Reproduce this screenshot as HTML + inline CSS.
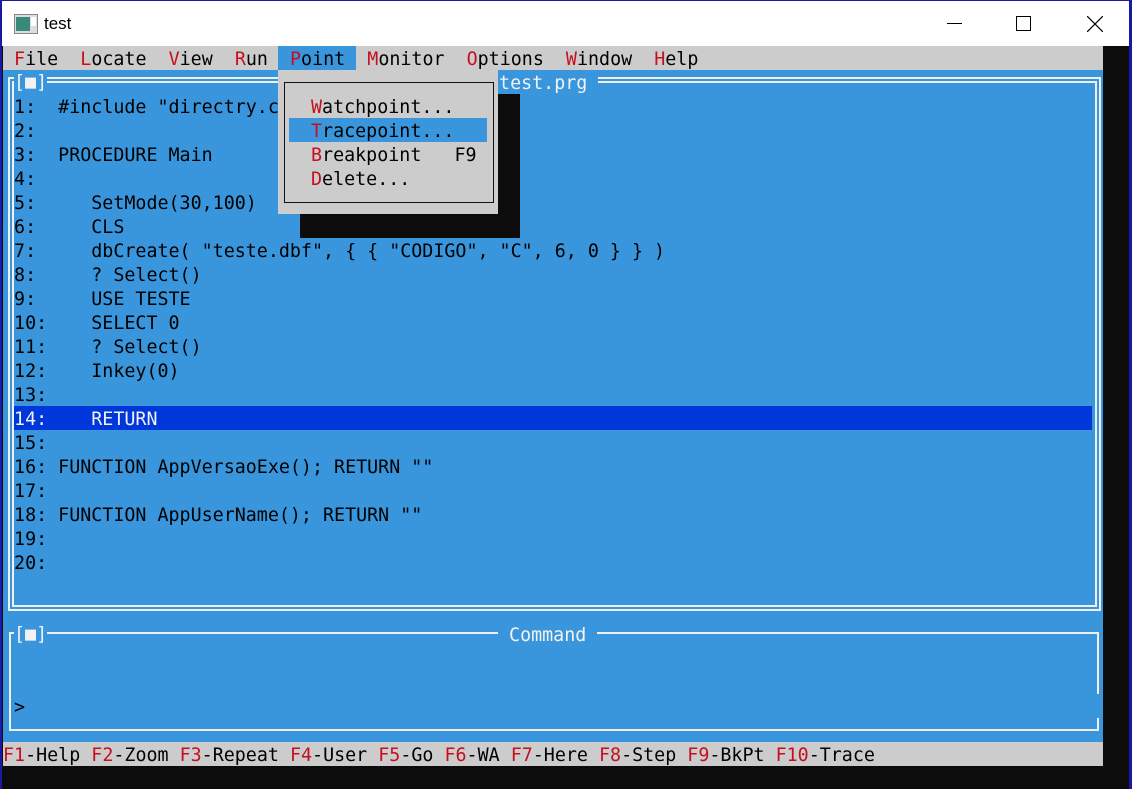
<!DOCTYPE html>
<html><head><meta charset="utf-8"><style>
*{margin:0;padding:0;box-sizing:border-box}
body{width:1132px;height:789px;background:#0c0c0c;position:relative;overflow:hidden;font-family:"DejaVu Sans Mono","Liberation Mono",monospace;}
.a{position:absolute}
.t{position:absolute;white-space:pre;font-size:18.33px;line-height:24px;color:#000;letter-spacing:0}
.r{color:#c50f1f}
.w{color:#f2f2f2}
</style></head><body>
<div class="a" style="left:0;top:0;width:1132px;height:789px;border-left:2px solid #1a1aa0;border-right:3px solid #1a1aa0;"></div>
<div class="a" style="left:2px;top:0;width:1127px;height:46px;background:#fff;border-top:1px solid #1a1aa0"></div>
<svg class="a" style="left:14px;top:14px" width="24" height="20" viewBox="0 0 24 20"><rect x="0.5" y="0.5" width="23" height="19" fill="#ddd" stroke="#888"/><rect x="2" y="3" width="14" height="14" fill="#3a8a7a"/><rect x="17" y="3" width="5" height="9" fill="#fff"/></svg>
<div class="a" style="left:44px;top:14px;font:17px 'Liberation Sans',sans-serif;color:#000">test</div>
<div class="a" style="left:947px;top:23px;width:15px;height:1px;background:#000"></div>
<div class="a" style="left:1016px;top:16px;width:15px;height:15px;border:1px solid #000"></div>
<svg class="a" style="left:1087px;top:16px" width="16" height="16"><path d="M0 0L16 16M16 0L0 16" stroke="#000" stroke-width="1.2"/></svg>
<div class="a" style="left:3px;top:46px;width:1100px;height:24px;background:#cccccc"></div>
<div class="a" style="left:278px;top:46px;width:78px;height:24px;background:#3a96dc"></div>
<div class="a" style="left:3px;top:70px;width:1100px;height:672px;background:#3a96dc"></div>
<div class="a" style="left:3px;top:742px;width:1100px;height:24px;background:#cccccc"></div>
<div class="a" style="left:8px;top:77px;width:1093px;height:534px;border:2px solid #f0f0f0"></div>
<div class="a" style="left:12px;top:81px;width:1085px;height:526px;border:2px solid #f0f0f0"></div>
<div class="a" style="left:9px;top:632px;width:1090px;height:99px;border:2px solid #f0f0f0"></div>
<div class="a" style="left:1094px;top:694px;width:8px;height:24px;background:#3a96dc"></div>
<div class="a" style="left:14px;top:406px;width:1078px;height:24px;background:#0037da"></div>
<div class="t w" style="left:14px;top:71px;height:20px;background:#3a96dc">[■]</div>
<div class="t w" style="left:488px;top:72px;height:20px;background:#3a96dc"> test.prg </div>
<div class="t w" style="left:14px;top:623px;height:20px;background:#3a96dc">[■]</div>
<div class="t w" style="left:498px;top:624px;height:20px;background:#3a96dc"> Command </div>
<div class="t" style="left:3px;top:96px"> 1:  #include "directry.ch"
 2:
 3:  PROCEDURE Main
 4:
 5:     SetMode(30,100)
 6:     CLS
 7:     dbCreate( "teste.dbf", { { "CODIGO", "C", 6, 0 } } )
 8:     ? Select()
 9:     USE TESTE
 10:    SELECT 0
 11:    ? Select()
 12:    Inkey(0)
 13:
<span class="w"> 14:    RETURN</span>
 15:
 16: FUNCTION AppVersaoExe(); RETURN ""
 17:
 18: FUNCTION AppUserName(); RETURN ""
 19:
 20:</div>
<div class="t" style="left:3px;top:696px"> &gt;</div>
<div class="t" style="left:3px;top:48px"> <span class="r">F</span>ile  <span class="r">L</span>ocate  <span class="r">V</span>iew  <span class="r">R</span>un  <span class="r">P</span>oint  <span class="r">M</span>onitor  <span class="r">O</span>ptions  <span class="r">W</span>indow  <span class="r">H</span>elp</div>
<div class="a" style="left:300px;top:94px;width:220px;height:144px;background:#0c0c0c"></div>
<div class="a" style="left:278px;top:70px;width:220px;height:144px;background:#cccccc"></div>
<div class="a" style="left:284px;top:82px;width:210px;height:121px;border:1px solid #111"></div>
<div class="a" style="left:289px;top:118px;width:198px;height:24px;background:#3a96dc"></div>
<div class="t" style="left:311px;top:96px"><span class="r">W</span>atchpoint...
<span class="r">T</span>racepoint...
<span class="r">B</span>reakpoint   F9
<span class="r">D</span>elete...</div>
<div class="t" style="left:3px;top:744px"><span class="r">F1</span>-Help <span class="r">F2</span>-Zoom <span class="r">F3</span>-Repeat <span class="r">F4</span>-User <span class="r">F5</span>-Go <span class="r">F6</span>-WA <span class="r">F7</span>-Here <span class="r">F8</span>-Step <span class="r">F9</span>-BkPt <span class="r">F10</span>-Trace</div>
</body></html>
